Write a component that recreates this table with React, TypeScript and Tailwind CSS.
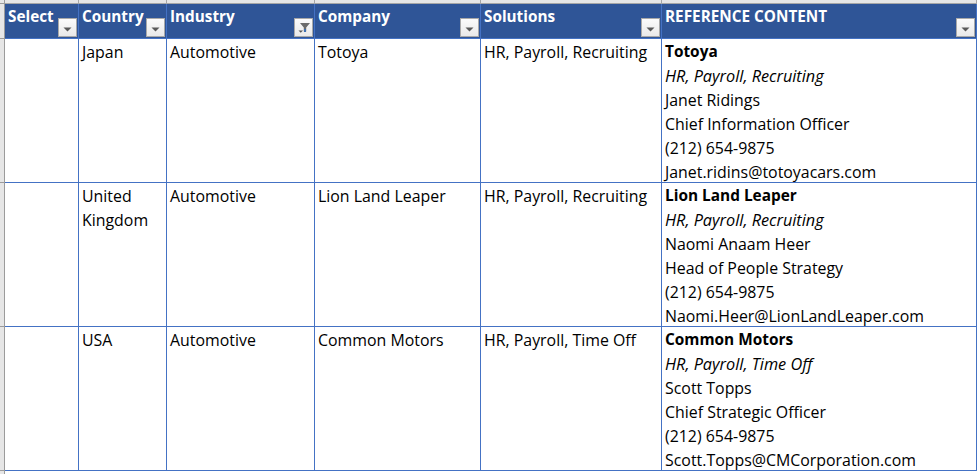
import React from "react";

const font = { fontFamily: '"Open Sans", "Noto Sans", sans-serif' };

function FilterButton({ filtered = false }: { filtered?: boolean }) {
  return (
    <div className="absolute right-[1px] bottom-[1px] w-[19px] h-[19px] border border-[#a9a9a9] bg-gradient-to-b from-[#fbfbfb] to-[#e9e9e9] flex items-center justify-center">
      {filtered ? (
        <svg width="17" height="17" viewBox="0 0 17 17">
          <path d="M5 4 H15 L11.2 8.5 V12.5 H8.8 V8.5 Z" fill="#6b6b6b" />
          <rect x="9" y="10" width="2" height="3" fill="#3d6fb0" />
          <path d="M3.5 11.5 H8 L5.75 13.8 Z" fill="#555" />
        </svg>
      ) : (
        <svg width="9" height="5" viewBox="0 0 9 5" className="mt-[3px]">
          <path d="M0.5 0.5 H8.5 L4.5 4.5 Z" fill="#595959" />
        </svg>
      )}
    </div>
  );
}

const headers = ["Select", "Country", "Industry", "Company", "Solutions", "REFERENCE CONTENT"];

const rows = [
  {
    country: "Japan",
    industry: "Automotive",
    company: "Totoya",
    solutions: "HR, Payroll, Recruiting",
    ref: ["Totoya", "HR, Payroll, Recruiting", "Janet Ridings", "Chief Information Officer", "(212) 654-9875", "Janet.ridins@totoyacars.com"],
  },
  {
    country: "United Kingdom",
    industry: "Automotive",
    company: "Lion Land Leaper",
    solutions: "HR, Payroll, Recruiting",
    ref: ["Lion Land Leaper", "HR, Payroll, Recruiting", "Naomi Anaam Heer", "Head of People Strategy", "(212) 654-9875", "Naomi.Heer@LionLandLeaper.com"],
  },
  {
    country: "USA",
    industry: "Automotive",
    company: "Common Motors",
    solutions: "HR, Payroll, Time Off",
    ref: ["Common Motors", "HR, Payroll, Time Off", "Scott Topps", "Chief Strategic Officer", "(212) 654-9875", "Scott.Topps@CMCorporation.com"],
  },
];

export default function App() {
  return (
    <div
      className="w-[980px] h-[474px] overflow-hidden bg-white text-black text-[15.9px] leading-[24px] grid grid-cols-[5px_74px_88px_148px_166px_181px_315px_1fr] grid-rows-[4px_35px_144px_144px_144px_1fr]"
      style={font}
    >
      {/* top strip */}
      <div className="bg-[#e6e6e6] border-r border-b border-[#9b9b9b]" />
      {[0, 1, 2, 3, 4, 5].map((i) => (
        <div key={i} className="bg-[#e6e6e6] border-r border-b border-[#a6a6a6]" />
      ))}
      <div className="bg-white" />

      {/* header row */}
      <div className="bg-[#e6e6e6] border-r border-b border-[#9b9b9b]" />
      {headers.map((h, i) => (
        <div
          key={h}
          className="relative bg-[#2f5597] text-white font-bold text-[15.3px] pl-[3px] border-r border-b border-[#4472c4] whitespace-nowrap"
        >
          {h}
          <FilterButton filtered={i === 2} />
        </div>
      ))}
      <div className="bg-white" />

      {/* body rows */}
      {rows.map((r, idx) => (
        <React.Fragment key={idx}>
          <div className="bg-[#e6e6e6] border-r border-b border-[#9b9b9b]" />
          <div className="border-r border-b border-[#4472c4]" />
          <div className="border-r border-b border-[#4472c4] pl-[3px] pt-[1px]">{r.country}</div>
          <div className="border-r border-b border-[#4472c4] pl-[3px] pt-[1px]">{r.industry}</div>
          <div className="border-r border-b border-[#4472c4] pl-[3px] pt-[1px]">{r.company}</div>
          <div className="border-r border-b border-[#4472c4] pl-[3px] pt-[1px] whitespace-nowrap">{r.solutions}</div>
          <div className="border-r border-b border-[#4472c4] pl-[3px] pt-[1px] flex flex-col whitespace-nowrap">
            <span className="font-bold text-[15.4px]">{r.ref[0]}</span>
            <span className="italic text-[16.3px]">{r.ref[1]}</span>
            <span>{r.ref[2]}</span>
            <span>{r.ref[3]}</span>
            <span>{r.ref[4]}</span>
            <span>{r.ref[5]}</span>
          </div>
          <div className="bg-white" />
        </React.Fragment>
      ))}

      {/* bottom filler */}
      <div className="bg-[#e6e6e6] border-r border-[#9b9b9b]" />
      <div className="col-span-7 bg-white" />
    </div>
  );
}
